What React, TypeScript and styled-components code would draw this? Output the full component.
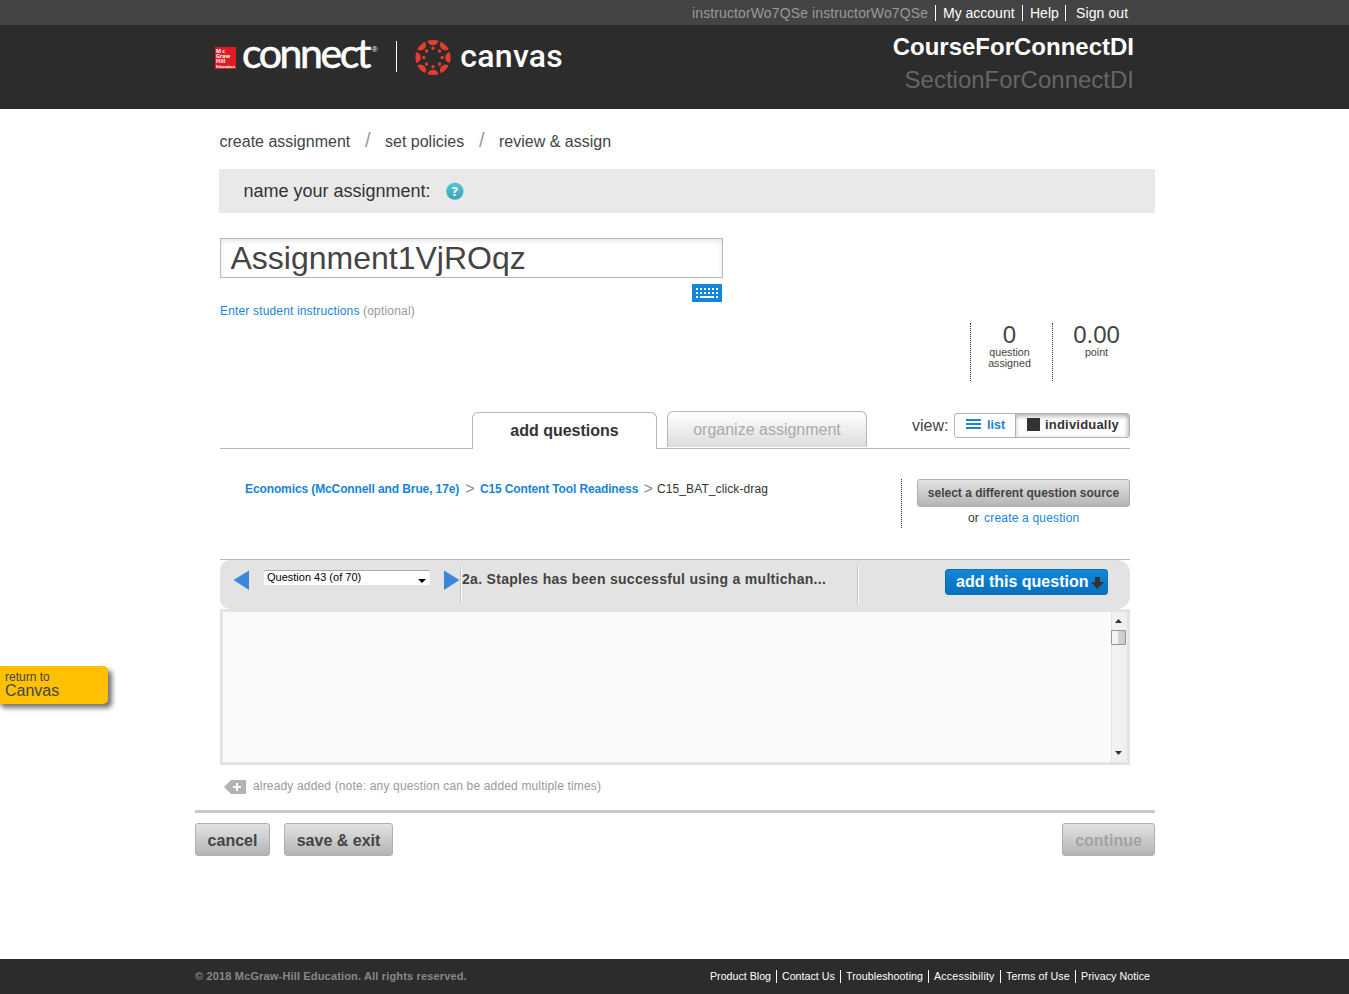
import React from "react";
import styled, { createGlobalStyle, css } from "styled-components";

const Global = createGlobalStyle`
  * { box-sizing: border-box; }
  body { margin: 0; background: #fff; font-family: "Liberation Sans", Arial, sans-serif; color: #333; }
  a { color: inherit; text-decoration: none; }
  button { font-family: inherit; margin: 0; padding: 0; }
`;

const Page = styled.div`
  display: flex;
  flex-direction: column;
  height: 994px;
  overflow: hidden;
`;

/* Single-line label with optional tracking; a fixed width keeps neighbours aligned. */
const Label = styled.span<{ $size: number; $w?: number; $track?: number; $bold?: boolean; $color?: string }>`
  display: inline-block;
  flex: none;
  white-space: nowrap;
  font-size: ${(p) => p.$size}px;
  line-height: 1.15;
  font-weight: ${(p) => (p.$bold ? 700 : 400)};
  letter-spacing: ${(p) => p.$track ?? 0}px;
  ${(p) => p.$w && css`width: ${p.$w}px;`}
  ${(p) => p.$color && css`color: ${p.$color};`}
`;

const TopBar = styled.div`
  height: 25px;
  flex: none;
  background: #444;
`;
const Center = styled.div`
  width: 960px;
  margin-left: 195px;
`;
const AccountNav = styled(Center)`
  display: flex;
  align-items: center;
  height: 26px;
  padding-left: 497px;
  color: #fff;
`;
const Bar = styled.i<{ $h: number; $l: number; $r: number }>`
  flex: none;
  width: 1px;
  height: ${(p) => p.$h}px;
  margin: 0 ${(p) => p.$r}px 0 ${(p) => p.$l}px;
  background: #fff;
`;

const Header = styled.header`
  height: 84px;
  flex: none;
  background: #2c2c2c;
`;
const HeaderInner = styled(Center)`
  display: flex;
  justify-content: space-between;
  padding: 0 21px 0 15px;
`;
const Course = styled.div`
  padding-top: 5px;
  text-align: right;
  font-size: 24px;
  line-height: 33px;
  color: #fff;
  font-weight: 700;
`;
const Section = styled.div`
  font-weight: 400;
  color: #666;
`;

const Steps = styled.nav`
  display: flex;
  align-items: center;
  height: 60px;
  flex: none;
  padding: 7px 0 0 219.5px;
  color: #444;
`;
const Slash = styled.span`
  width: 34.5px;
  text-align: center;
  font-size: 20px;
  line-height: 20px;
  margin-top: -6px;
  color: #999;
`;
const NameBar = styled.div`
  display: flex;
  align-items: center;
  height: 44px;
  width: 936px;
  flex: none;
  margin-left: 219px;
  padding-left: 24.5px;
  background: #e9e9e9;
`;

const NameSection = styled.section`
  width: 503px;
  height: 85px;
  flex: none;
  margin: 25px 0 0 220px;
`;
const NameInput = styled.input`
  display: block;
  width: 503px;
  height: 40px;
  padding: 0 9.5px;
  border: 1px solid #b8b8b8;
  box-shadow: inset 0 2px 5px #e4e4e4;
  color: #444;
  font: 32px "Liberation Sans", Arial, sans-serif;
  outline: none;
`;
const KeyRow = styled.div`
  display: flex;
  justify-content: flex-end;
  padding: 6px 1px 0 0;
  height: 27px;
`;
const Instructions = styled.div`
  display: flex;
`;

const Stats = styled.div`
  display: flex;
  height: 58px;
  width: 174px;
  flex: none;
  margin-left: 970px;
`;
const Stat = styled.div<{ $w: number }>`
  display: flex;
  flex: none;
  flex-direction: column;
  align-items: center;
  width: ${(p) => p.$w}px;
  padding-right: 4px;
  border-left: 1px dotted #333;
  color: #444;
`;
const StatNumber = styled.div`
  font-size: 24px;
  line-height: 24px;
`;
const StatCaption = styled.div`
  font-size: 10.67px;
  line-height: 11px;
  text-align: center;
`;

const TabRow = styled.div`
  display: flex;
  height: 39px;
  width: 910px;
  flex: none;
  margin: 29px 0 0 220px;
  padding-left: 252px;
  border-bottom: 1px solid #b7b7b7;
`;
const Tab = styled.div<{ $active?: boolean }>`
  display: flex;
  align-items: center;
  justify-content: center;
  border: 1px solid #b7b7b7;
  border-bottom: 0;
  border-radius: 6px 6px 0 0;
  ${(p) =>
    p.$active
      ? css`
          width: 185px;
          height: 37px;
          margin-top: 2px;
          background: #fff;
          color: #333;
        `
      : css`
          width: 200px;
          height: 36px;
          margin: 1px 0 0 10px;
          padding-top: 2px;
          background: linear-gradient(#fff, #dcdcdc);
          color: #aaa;
        `}
`;
const ViewLabel = styled.div`
  width: 42px;
  margin: 7px 0 0 45px;
  color: #444;
`;
const ViewToggle = styled.div`
  display: flex;
  width: 176px;
  height: 25px;
  margin-top: 3px;
  border: 1px solid #b2b2b2;
  border-radius: 3px;
  overflow: hidden;
`;
const ToggleOption = styled.div<{ $on?: boolean }>`
  display: flex;
  align-items: center;
  gap: ${(p) => (p.$on ? 5 : 6)}px;
  width: ${(p) => (p.$on ? 114 : 60)}px;
  padding: 0 0 1px 11px;
  color: ${(p) => (p.$on ? "#333" : "#1784d8")};
  ${(p) =>
    p.$on &&
    css`
      border-left: 1px solid #b2b2b2;
      box-shadow: inset -1px 2px 5px #aaa;
    `}
`;
const ListGlyph = styled.span`
  width: 15px;
  height: 10px;
  margin-bottom: 2px;
  border: solid #1784d8;
  border-width: 2px 0;
  background: linear-gradient(#1784d8, #1784d8) 0 2px / 15px 2px no-repeat;
`;
const SquareGlyph = styled.span`
  width: 13px;
  height: 13px;
  margin-bottom: 1px;
  background: #333;
`;

const SourceRow = styled.div`
  display: flex;
  height: 111px;
  width: 910px;
  flex: none;
  margin-left: 220px;
  padding-top: 30px;
  border-bottom: 1px solid #b7b7b7;
`;
const Crumbs = styled.div`
  display: flex;
  align-items: flex-start;
  width: 681px;
  padding: 4px 0 0 25px;
  color: #1784d8;
`;
const Chevron = styled.span<{ $w: number }>`
  width: ${(p) => p.$w}px;
  text-align: center;
  font-size: 16px;
  line-height: 11px;
  color: #888;
`;
const SourceActions = styled.div`
  display: flex;
  flex-direction: column;
  width: 229px;
  height: 49px;
  padding-left: 15px;
  border-left: 1px dotted #333;
`;
const GreyButton = styled.button<{ $w: number; $h: number; $drop: number; $disabled?: boolean }>`
  display: flex;
  align-items: center;
  justify-content: center;
  flex: none;
  width: ${(p) => p.$w}px;
  height: ${(p) => p.$h}px;
  padding-top: ${(p) => p.$drop}px;
  border: 1px solid #aeaeae;
  border-radius: 3px;
  background: linear-gradient(#e3e3e3, #b4b4b4);
  color: ${(p) => (p.$disabled ? "#a3a3a3" : "#444")};
`;
const CreateLine = styled.div`
  display: flex;
  padding: 5px 0 0 51px;
`;

const QuestionBar = styled.div`
  display: flex;
  width: 910px;
  height: 49px;
  flex: none;
  margin-left: 220px;
  border-radius: 10px 13px 13px 10px;
  background: #e3e3e3;
`;
const Picker = styled.div`
  display: flex;
  width: 240px;
  padding: 10px 0 0 13px;
`;
const Select = styled.div`
  display: flex;
  justify-content: space-between;
  width: 166px;
  height: 15px;
  margin: 0 14px;
  padding: 0 4px 0 3px;
  border-radius: 2px;
  border-top: 1px solid #aaa;
  background: #fff;
  color: #000;
`;
const Title = styled.div`
  width: 398px;
  height: 38px;
  margin-top: 6px;
  padding: 4px 0 0 1px;
  border: solid #c6c6c6;
  border-width: 0 1px;
  box-shadow: inset 1px 0 #fff, 1px 0 #fff;
  color: #444;
`;
const AddButton = styled.button`
  display: flex;
  align-items: center;
  width: 163px;
  height: 26px;
  margin: 9px 0 0 87px;
  padding: 0 0 0 10px;
  border: 1px solid #0872bd;
  border-radius: 3px;
  background: linear-gradient(#1186db, #0870bc);
  color: #fff;
  text-align: left;
`;
const Frame = styled.div`
  display: flex;
  justify-content: flex-end;
  width: 910px;
  height: 156px;
  flex: none;
  margin-left: 220px;
  border: 3px solid #e3e3e3;
  background: #fafafa;
`;
const Scroll = styled.div`
  display: flex;
  flex-direction: column;
  align-items: flex-start;
  width: 16px;
  padding: 7px 0 7px 4px;
  box-shadow: inset 1px 0 #e3e3e3;
  background: linear-gradient(90deg, #f3f3f3, #eee);
`;
const Thumb = styled.div`
  flex: none;
  width: 15px;
  height: 15px;
  margin: 7px 0 auto -4px;
  border: 1px solid #979797;
  border-radius: 1px;
  background: linear-gradient(90deg, #f4f4f4 45%, #d4d4d8 50%, #c9c9cc);
`;
const Note = styled.div`
  display: flex;
  align-items: center;
  height: 45px;
  flex: none;
  padding: 0 0 2px 224px;
  color: #999;
`;
const Actions = styled(Center)`
  display: flex;
  flex: none;
  gap: 14px;
  height: 46px;
  padding-top: 10px;
  border-top: 3px solid #c9c9c9;
  & > :last-child { margin-left: auto; }
`;
const Footer = styled.footer`
  height: 35px;
  flex: none;
  margin-top: auto;
  background: #2c2c2c;
`;
const FooterInner = styled(Center)`
  display: flex;
  align-items: center;
  height: 35px;
  color: #fff;
`;
const FooterLinks = styled.div`
  display: flex;
  align-items: center;
  margin-left: 243px;
`;
const ReturnTab = styled.a`
  position: absolute;
  left: -4px;
  top: 666px;
  width: 112px;
  height: 38px;
  padding: 5px 0 0 9px;
  border-radius: 5px;
  background: #fec000;
  box-shadow: 4px 4px 5px rgba(0, 0, 0, 0.55);
  display: flex;
  flex-direction: column;
  line-height: 1;
  & > :last-child { margin-top: -3px; }
`;

const Logos = () => {
  const spokes = [0, 45, 90, 135, 180, 225, 270, 315];
  return (
    <svg width="360" height="60" viewBox="210 25 360 60">
      <rect x="215" y="47" width="21" height="22" fill="#e21a23" />
      <g fill="#fff" fontFamily="Open Sans" fontWeight="700" fontSize="5.4">
        <text x="216" y="53" textLength="9">Mc</text>
        <text x="216" y="58.2" textLength="14">Graw</text>
        <text x="216" y="63.4" textLength="9.5">Hill</text>
        <text x="216" y="67.8" fontSize="3.9" textLength="19">Education</text>
      </g>
      <text x="242" y="68.3" fill="#fff" stroke="#fff" strokeWidth="0.6" fontFamily="Lato" fontSize="41" textLength="129.5">connect</text>
      <text x="371.8" y="51.5" fill="#fff" fontFamily="Liberation Sans" fontSize="8">®</text>
      <rect x="396" y="41" width="1" height="31" fill="#fff" />
      <clipPath id="disc"><circle cx="433" cy="57.5" r="17.6" /></clipPath>
      <g fill="#e63c2e" clipPath="url(#disc)">
        {spokes.map((a) => (
          <g key={a} transform={`rotate(${a} 433 57.5)`}>
            <circle cx="433" cy="39.6" r="5.7" />
            <circle cx="433" cy="48.3" r="1.7" />
          </g>
        ))}
      </g>
      <text x="460.3" y="66.5" fill="#fff" fontFamily="Roboto" fontWeight="500" fontSize="32" textLength="102.5">canvas</text>
    </svg>
  );
};

const HelpIcon = () => (
  <svg width="18" height="18" viewBox="0 0 18 18">
    <defs>
      <linearGradient id="help" x2="0" y2="1"><stop stopColor="#4fc6d6" /><stop offset="1" stopColor="#3fa3b8" /></linearGradient>
    </defs>
    <circle cx="8.9" cy="9.2" r="8.6" fill="url(#help)" />
    <text x="8.9" y="13.7" textAnchor="middle" fill="#fff" fontFamily="Open Sans" fontWeight="700" fontSize="13">?</text>
  </svg>
);

const KeyboardIcon = () => (
  <svg width="30" height="18" viewBox="0 0 30 18" shapeRendering="crispEdges">
    <rect width="30" height="18" rx="1" fill="#1186db" />
    <g fill="#fff">
      {[4, 8].map((y) => [4, 8, 12, 16, 20, 24].map((x) => <rect key={`${x}-${y}`} x={x} y={y} width="2" height="2" />))}
      <rect x="4" y="12" width="2" height="2" />
      <rect x="8" y="12" width="14" height="2" />
      <rect x="24" y="12" width="2" height="2" />
    </g>
  </svg>
);

const Glyph = styled.svg`
  flex: none;
`;
const Arrow = ({ d, w, h, fill }: { d: string; w: number; h: number; fill: string }) => (
  <Glyph width={w} height={h}><path d={d} fill={fill} /></Glyph>
);
const TagIcon = styled.svg`
  flex: none;
  margin-top: 1px;
`;

const footerLinks: [string, number, number][] = [
  ["Product Blog", 61, 0], ["Contact Us", 53, 0], ["Troubleshooting", 77, 0.07],
  ["Accessibility", 61, 0.2], ["Terms of Use", 64, 0.08], ["Privacy Notice", 70, 0.07],
];

export default function App() {
  return (
    <Page>
      <Global />
      <TopBar>
        <AccountNav>
          <Label $size={14} $w={238} $color="#999" $track={0.12}>instructorWo7QSe instructorWo7QSe</Label>
          <Bar $h={16} $l={5} $r={7} />
          <Label $size={14} $w={73}>My account</Label>
          <Bar $h={16} $l={6} $r={7} />
          <Label $size={14} $w={29}>Help</Label>
          <Bar $h={16} $l={6} $r={10} />
          <Label $size={14} $track={0.1}>Sign out</Label>
        </AccountNav>
      </TopBar>
      <Header>
        <HeaderInner>
          <Logos />
          <Course>CourseForConnectDI<Section>SectionForConnectDI</Section></Course>
        </HeaderInner>
      </Header>

      <Steps>
        <Label $size={16} $w={131}>create assignment</Label>
        <Slash>/</Slash>
        <Label $size={16} $w={79.5}>set policies</Label>
        <Slash>/</Slash>
        <Label $size={16}>review &amp; assign</Label>
      </Steps>
      <NameBar>
        <Label $size={18} $w={202}>name your assignment:</Label>
        <HelpIcon />
      </NameBar>
      <NameSection>
        <NameInput defaultValue="Assignment1VjROqz" />
        <KeyRow><KeyboardIcon /></KeyRow>
        <Instructions>
          <Label $size={12} $w={143} $track={0.16} $color="#1784d8">Enter student instructions</Label>
          <Label $size={12} $track={0.2} $color="#999">(optional)</Label>
        </Instructions>
      </NameSection>
      <Stats>
        <Stat $w={82}><StatNumber>0</StatNumber><StatCaption>question<br />assigned</StatCaption></Stat>
        <Stat $w={92}><StatNumber>0.00</StatNumber><StatCaption>point</StatCaption></Stat>
      </Stats>

      <TabRow>
        <Tab $active><Label $size={16} $bold>add questions</Label></Tab>
        <Tab><Label $size={16}>organize assignment</Label></Tab>
        <ViewLabel><Label $size={16}>view:</Label></ViewLabel>
        <ViewToggle>
          <ToggleOption><ListGlyph /><Label $size={12.5} $bold>list</Label></ToggleOption>
          <ToggleOption $on><SquareGlyph /><Label $size={13} $bold $track={0.2}>individually</Label></ToggleOption>
        </ViewToggle>
      </TabRow>

      <SourceRow>
        <Crumbs>
          <Label $size={12} $w={215} $bold $track={-0.11}>Economics (McConnell and Brue, 17e)</Label>
          <Chevron $w={20}>&gt;</Chevron>
          <Label $size={12} $w={160} $bold $track={-0.14}>C15 Content Tool Readiness</Label>
          <Chevron $w={17}>&gt;</Chevron>
          <Label $size={12} $track={0.1} $color="#333">C15_BAT_click-drag</Label>
        </Crumbs>
        <SourceActions>
          <GreyButton $w={213} $h={28} $drop={1}><Label $size={12} $bold>select a different question source</Label></GreyButton>
          <CreateLine>
            <Label $size={12} $w={16}>or</Label>
            <Label $size={12} $track={0.2} $color="#1784d8">create a question</Label>
          </CreateLine>
        </SourceActions>
      </SourceRow>

      <QuestionBar>
        <Picker>
          <Arrow w={17} h={20} d="M0.5 10 L16 0.5 V20 Z" fill="#3b87d9" />
          <Select>
            <Label $size={11}>Question 43 (of 70)</Label>
            <svg width="8" height="14"><path d="M0 8 H8 L4 12 Z" fill="#000" /></svg>
          </Select>
          <Arrow w={16} h={20} d="M0 0.5 L15.5 10 L0 20 Z" fill="#3b87d9" />
        </Picker>
        <Title><Label $size={14} $bold $track={0.3}>2a. Staples has been successful using a multichan...</Label></Title>
        <AddButton>
          <Label $size={16} $w={135} $bold>add this question</Label>
          <Arrow w={13} h={15} d="M4 2 H9 V7 H13 L6.5 14 L0 7 H4 Z" fill="#333" />
        </AddButton>
      </QuestionBar>
      <Frame>
        <Scroll>
          <Glyph width="7" height="4"><path d="M0 4 L3.5 0 L7 4Z" fill="#333" /></Glyph>
          <Thumb />
          <Glyph width="7" height="4"><path d="M0 0 L3.5 4 L7 0Z" fill="#333" /></Glyph>
        </Scroll>
      </Frame>
      <Note>
        <TagIcon width="29" height="14">
          <path d="M0 7 L7 0 H22 V14 H7 Z" fill="#b3b3b3" />
          <path d="M9 7 H17 M13 3 V11" stroke="#fff" strokeWidth="2" />
        </TagIcon>
        <Label $size={12} $track={0.16}>already added (note: any question can be added multiple times)</Label>
      </Note>
      <Actions>
        <GreyButton $w={75} $h={33} $drop={3}><Label $size={16} $bold>cancel</Label></GreyButton>
        <GreyButton $w={109} $h={33} $drop={3}><Label $size={16} $bold>save &amp; exit</Label></GreyButton>
        <GreyButton $w={93} $h={33} $drop={3} $disabled><Label $size={16} $bold>continue</Label></GreyButton>
      </Actions>

      <Footer>
        <FooterInner>
          <Label $size={11} $w={272} $bold $track={0.16} $color="#888">© 2018 McGraw-Hill Education. All rights reserved.</Label>
          <FooterLinks>
            {footerLinks.map(([name, w, track], i) => (
              <React.Fragment key={name}>
                {i > 0 && <Bar $h={13} $l={5} $r={5} />}
                <Label as="a" $size={10.67} $w={w} $track={track}>{name}</Label>
              </React.Fragment>
            ))}
          </FooterLinks>
        </FooterInner>
      </Footer>

      <ReturnTab>
        <Label $size={12} $color="#444">return to</Label>
        <Label $size={16} $color="#444">Canvas</Label>
      </ReturnTab>
    </Page>
  );
}
